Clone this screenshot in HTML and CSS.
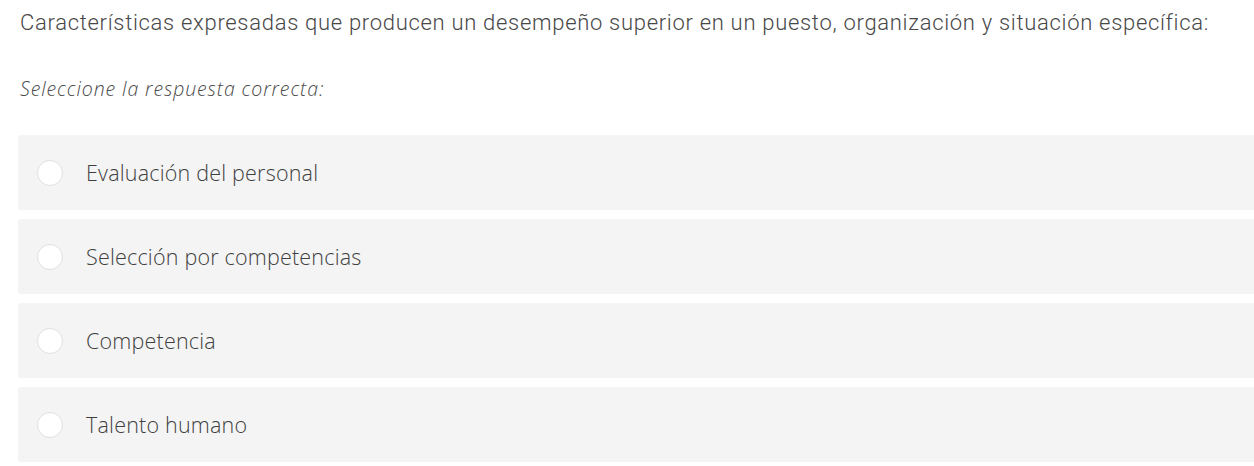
FILE: index.html
```html
<!DOCTYPE html>
<html lang="es">
<head>
<meta charset="utf-8">
<link rel="stylesheet" href="styles.css">
</head>
<body>
<div class="quiz">
  <p class="question">Características expresadas que producen un desempeño superior en un puesto, organización y situación específica:</p>
  <p class="hint">Seleccione la respuesta correcta:</p>
  <ul class="options">
    <li class="option"><span class="radio"></span><span class="label">Evaluación del personal</span></li>
    <li class="option"><span class="radio"></span><span class="label">Selección por competencias</span></li>
    <li class="option"><span class="radio"></span><span class="label">Competencia</span></li>
    <li class="option"><span class="radio"></span><span class="label">Talento humano</span></li>
  </ul>
</div>
</body>
</html>
```
FILE: styles.css
```css
html, body {
  margin: 0;
  padding: 0;
  background: #ffffff;
}
.quiz {
  padding: 8px 0 0 18px;
}
.question {
  margin: 0 0 0 2px;
  font-family: Roboto, "Liberation Sans", sans-serif;
  font-weight: 300;
  font-size: 22px;
  letter-spacing: 0.7px;
  line-height: 30px;
  color: #484848;
  white-space: nowrap;
}
.hint {
  margin: 38px 0 0 2px;
  font-family: "Open Sans", sans-serif;
  font-style: italic;
  font-weight: 300;
  font-size: 19.5px;
  letter-spacing: 0.9px;
  line-height: 26px;
  color: #4a4a4a;
}
.options {
  list-style: none;
  margin: 33px 0 0 0;
  padding: 0;
  display: flex;
  flex-direction: column;
  gap: 9px;
}
.option {
  height: 75px;
  background: #f4f4f4;
  border-radius: 3px 0 0 3px;
  display: flex;
  align-items: center;
  padding-left: 19px;
}
.radio {
  width: 26px;
  height: 26px;
  box-sizing: border-box;
  border-radius: 50%;
  background: #fff;
  border: 1px solid #e0e0e0;
  flex: none;
}
.label {
  margin-left: 23px;
  font-family: "Open Sans", sans-serif;
  font-weight: 300;
  font-size: 21.5px;
  letter-spacing: 0.2px;
  color: #404040;
}
```
